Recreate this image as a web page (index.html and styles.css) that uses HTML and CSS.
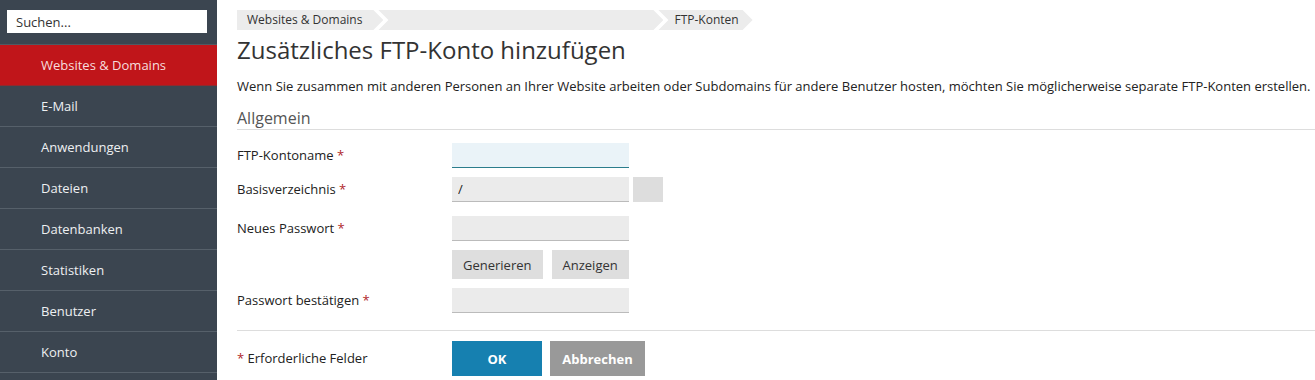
FILE: index.html
```html
<!DOCTYPE html>
<html lang="de">
<head>
    <meta charset="UTF-8">
    <meta name="viewport" content="width=device-width, initial-scale=1.0">
    <title>Zusätzliches FTP-Konto hinzufügen</title>
    <link rel="stylesheet" href="styles.css">
</head>
<body>

    <div class="page">
        <aside class="sidebar">
            <div class="search">
                <input type="text" placeholder="Suchen...">
            </div>
            <ul class="nav">
                <li class="active">Websites &amp; Domains</li>
                <li>E-Mail</li>
                <li>Anwendungen</li>
                <li>Dateien</li>
                <li>Datenbanken</li>
                <li>Statistiken</li>
                <li>Benutzer</li>
                <li>Konto</li>
            </ul>
        </aside>

        <main class="main">
            <div class="breadcrumb">
                <span class="crumb first">Websites &amp; Domains</span>
                <span class="crumb filler"></span>
                <span class="crumb last">FTP-Konten</span>
            </div>

            <h1>Zusätzliches FTP-Konto hinzufügen</h1>
            <p class="intro">Wenn Sie zusammen mit anderen Personen an Ihrer Website arbeiten oder Subdomains für andere Benutzer hosten, möchten Sie möglicherweise separate FTP-Konten erstellen.</p>

            <h2>Allgemein</h2>

            <form class="form">
                <div class="field">
                    <label>FTP-Kontoname <span class="req">*</span></label>
                    <input type="text" class="focused">
                </div>
                <div class="field spaced">
                    <label>Basisverzeichnis <span class="req">*</span></label>
                    <input type="text" value="/">
                    <button type="button" class="btn-browse"></button>
                </div>
                <div class="field">
                    <label>Neues Passwort <span class="req">*</span></label>
                    <input type="password">
                </div>
                <div class="field">
                    <label></label>
                    <div class="pw-actions">
                        <button type="button" class="btn">Generieren</button>
                        <button type="button" class="btn">Anzeigen</button>
                    </div>
                </div>
                <div class="field">
                    <label>Passwort bestätigen <span class="req">*</span></label>
                    <input type="password">
                </div>

                <div class="footer">
                    <label><span class="req">*</span> Erforderliche Felder</label>
                    <button type="submit" class="btn-ok">OK</button>
                    <button type="button" class="btn-cancel">Abbrechen</button>
                </div>
            </form>
        </main>
    </div>

</body>
</html>
```

FILE: styles.css
```css
* {
    box-sizing: border-box;
}
body {
    font-family: "Open Sans", Arial, sans-serif;
    font-size: 13px;
    color: #222;
    margin: 0;
    background-color: #fff;
}
.page {
    display: flex;
    min-height: 100vh;
}

/* Seitenleiste */
.sidebar {
    width: 217px;
    flex-shrink: 0;
    background-color: #3b4550;
}
.search {
    height: 44px;
    padding: 10px 10px 0 7px;
}
.search input {
    width: 200px;
    height: 23px;
    border: none;
    padding: 0 9px;
    font-family: inherit;
    font-size: 13px;
    background-color: #fff;
}
.search input::placeholder {
    color: #333;
}
.nav {
    list-style: none;
    margin: 0;
    padding: 0;
    border-top: 1px solid #4f5963;
}
.nav li {
    height: 41px;
    line-height: 40px;
    padding-left: 41px;
    color: #eef0f2;
    border-bottom: 1px solid #56606a;
}
.nav li.active {
    background-color: #c0151a;
    color: #f7dede;
    border-bottom-color: #8e2a2e;
}

/* Inhalt */
.main {
    flex: 1;
    min-width: 0;
    padding: 10px 0 0 20px;
}
.breadcrumb {
    display: flex;
    height: 20px;
}
.crumb {
    height: 20px;
    line-height: 20px;
    font-size: 12px;
    color: #333;
    background-color: #ececec;
    padding: 0 21px 0 20px;
    margin-left: -5px;
    clip-path: polygon(0 0, calc(100% - 10px) 0, 100% 50%, calc(100% - 10px) 100%, 0 100%, 10px 50%);
}
.crumb.first {
    padding-left: 10px;
    margin-left: 0;
    clip-path: polygon(0 0, calc(100% - 10px) 0, 100% 50%, calc(100% - 10px) 100%, 0 100%);
}
.crumb.filler {
    width: 285px;
    padding: 0;
}
.crumb.last {
    padding: 0 14px 0 16px;
}
h1 {
    font-size: 24px;
    font-weight: normal;
    line-height: 30px;
    color: #333;
    margin: 5px 0 0;
}
.intro {
    line-height: 18px;
    white-space: nowrap;
    margin: 12px 0 0;
}
h2 {
    font-size: 16px;
    font-weight: normal;
    line-height: 20px;
    color: #555;
    margin: 13px 0 0;
    padding-bottom: 1px;
    border-bottom: 1px solid #ddd;
}

/* Formular */
.form {
    padding-top: 13px;
}
.field {
    display: flex;
    margin-bottom: 9px;
}
.field.spaced {
    margin-bottom: 14px;
}
.field label,
.footer label {
    width: 215px;
    line-height: 25px;
    color: #222;
}
.req {
    color: #b0262a;
}
.field input {
    width: 177px;
    height: 25px;
    border: none;
    border-bottom: 1px solid #bbb;
    background-color: #ebebeb;
    padding: 0 6px;
    font-family: inherit;
    font-size: 13px;
    color: #222;
}
.field input.focused {
    background-color: #eaf3f8;
    border-bottom-color: #2b7d8c;
}
.btn-browse {
    width: 30px;
    height: 25px;
    margin-left: 4px;
    border: none;
    background-color: #ddd;
}
.pw-actions {
    display: flex;
    gap: 9px;
}
.btn {
    height: 29px;
    border: none;
    background-color: #dedede;
    color: #333;
    font-family: inherit;
    font-size: 13px;
    padding: 0 11px;
}
.footer {
    display: flex;
    align-items: flex-start;
    margin-top: 17px;
    padding-top: 10px;
    border-top: 1px solid #ddd;
}
.footer label {
    padding-top: 5px;
}
.btn-ok,
.btn-cancel {
    height: 35px;
    border: none;
    color: #fff;
    font-family: inherit;
    font-size: 13px;
    font-weight: bold;
}
.btn-ok {
    width: 90px;
    background-color: #1680b0;
}
.btn-cancel {
    width: 95px;
    margin-left: 8px;
    background-color: #999;
}
```
